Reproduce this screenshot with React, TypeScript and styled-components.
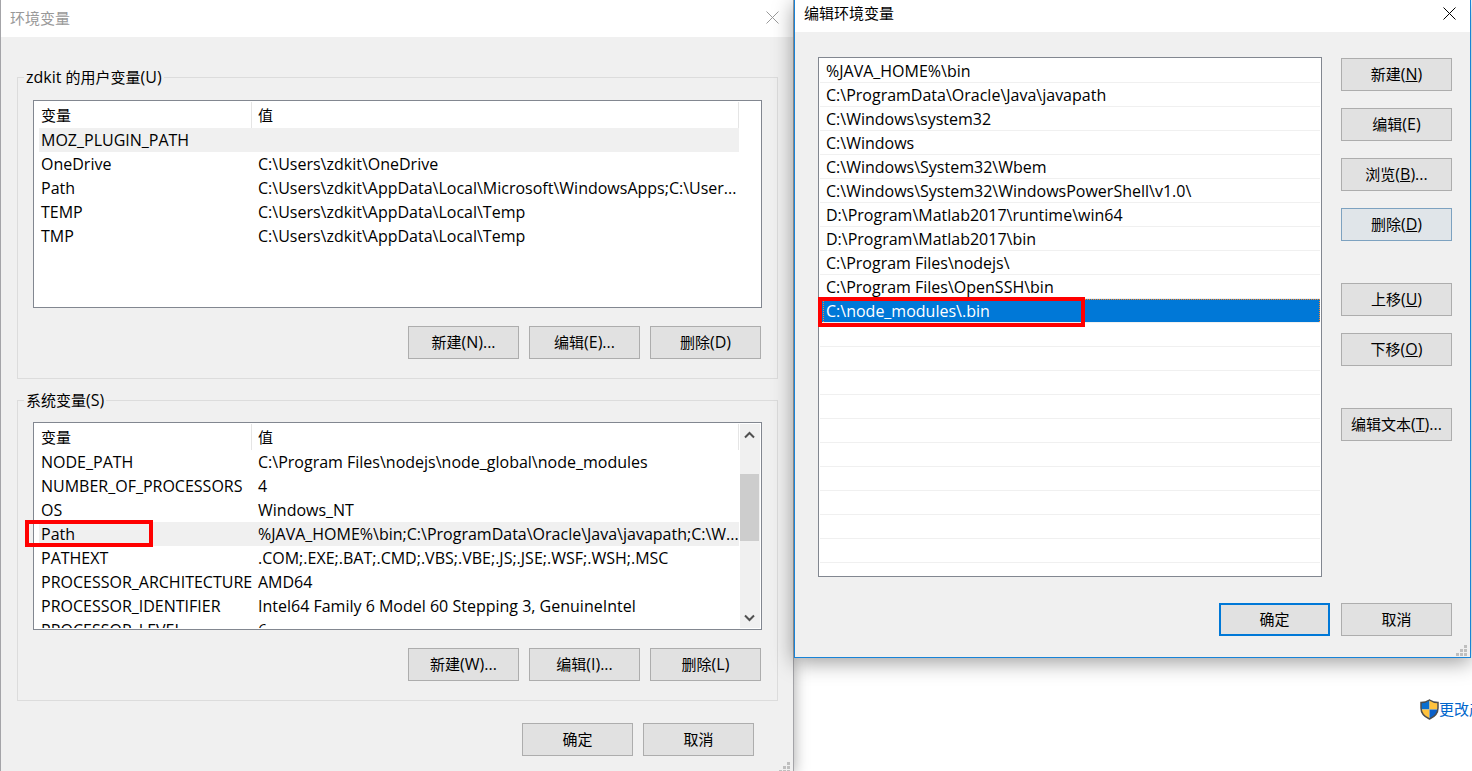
import React from "react";
import styled, { createGlobalStyle, css } from "styled-components";

const GlobalStyle = createGlobalStyle`
  * { box-sizing: border-box; }
  body {
    margin: 0;
    background: #fff;
    color: #000;
    font: 15px/24px "Open Sans", "Noto Sans CJK SC", sans-serif;
    overflow: hidden;
  }
  button { font: inherit; color: inherit; }
`;

const Desktop = styled.div`
  display: grid;
  grid-template-columns: minmax(0, 794fr) minmax(0, 678fr);
  min-height: 100vh;
`;

const Side = styled.div`
  position: relative;
  z-index: 1;
  padding-right: 1px;
`;

const Window = styled.section<{ $active?: boolean }>`
  position: relative;
  display: flex;
  flex-direction: column;
  background: #f0f0f0;
  ${(p) =>
    p.$active
      ? css`
          border: 1px solid #1883d7;
          border-top: 0;
          box-shadow: 0 4px 20px rgba(0, 0, 0, 0.4);
        `
      : css`
          border: solid #a4a4a8;
          border-width: 0 1px;
          box-shadow: 0 0 14px rgba(0, 0, 0, 0.35);
        `}
`;

const TitleBar = styled.header<{ $active?: boolean }>`
  display: flex;
  align-items: center;
  justify-content: space-between;
  height: ${(p) => (p.$active ? 32 : 37)}px;
  padding: ${(p) => (p.$active ? "0 14px 6px 9px" : "0 14px 2px 9px")};
  background: #fff;
  color: ${(p) => (p.$active ? "#000" : "#999")};
`;

const Title = styled.h1`
  margin: 0;
  font-size: 15px;
  font-weight: 400;
`;

const CloseButton = styled.button`
  display: flex;
  padding: 0;
  border: 0;
  background: none;
`;

const Body = styled.div`
  display: flex;
  flex-direction: column;
  gap: 9px;
  padding: 28px 15px 18px 16px;
`;

const Group = styled.fieldset<{ $compact?: boolean }>`
  min-width: 0;
  margin: 0;
  padding: ${(p) => (p.$compact ? 10 : 11)}px 15px 19px;
  border: 1px solid #dcdcdc;
`;

const Legend = styled.legend`
  height: 24px;
  margin-left: -9px;
  padding: 0 2px;
`;

/* Latin letters and punctuation beside the 15px Chinese labels */
const Key = styled.span`
  font-size: 16px;
`;

const ListFrame = styled.div`
  position: relative;
  height: 208px;
  border: 1px solid #828790;
  background: #fff;
`;

const Viewport = styled.div`
  display: flex;
  height: 100%;
  padding: 1px 1px 1px 5px;
`;

const TableClip = styled.div<{ $scrolls?: boolean }>`
  flex: 1;
  min-width: 0;
  margin-right: ${(p) => (p.$scrolls ? 1 : 21)}px;
  overflow: hidden;
`;

const Table = styled.table`
  width: 100%;
  table-layout: fixed;
  border-collapse: separate;
  border-spacing: 0;

  th,
  td {
    padding: 0 0 0 6px;
    text-align: left;
    font-weight: 400;
    white-space: nowrap;
    overflow: hidden;
  }
  th:first-child,
  td:first-child {
    width: 213px;
    padding-left: 2px;
  }
  th {
    height: 26px;
    border-right: 1px solid #e5e5e5;
  }
  td {
    height: 24px;
    font-size: 16px;
  }
`;

const Row = styled.tr<{ $selected?: boolean }>`
  background: ${(p) => (p.$selected ? "#f0f0f0" : "transparent")};
`;

const ScrollBar = styled.div`
  display: flex;
  flex-direction: column;
  justify-content: space-between;
  width: 20px;
  background: #f0f0f0;
`;

const ScrollButton = styled.button`
  display: flex;
  justify-content: center;
  align-items: center;
  width: 19px;
  height: 21px;
  padding: 0;
  border: 0;
  background: none;
`;

const Thumb = styled.div`
  width: 19px;
  height: 67px;
  margin: 29px 0 auto;
  background: #cdcdcd;
`;

const Highlight = styled.div`
  position: absolute;
  border: 4px solid #f00;
  pointer-events: none;
`;

const VariableHighlight = styled(Highlight)`
  left: -9px;
  top: 97px;
  width: 128px;
  height: 27px;
`;

const EntryHighlight = styled(Highlight)`
  left: -2px;
  top: -2px;
  width: 267px;
  height: 30px;
`;

const Actions = styled.div<{ $kind: "group" | "window" | "dialog" }>`
  display: flex;
  justify-content: flex-end;
  gap: ${(p) => (p.$kind === "dialog" ? 11 : 10)}px;
  ${(p) => p.$kind === "group" && "padding: 18px 1px 0 0;"}
  ${(p) => p.$kind === "window" && "padding: 13px 24px 0 0;"}
  ${(p) => p.$kind === "dialog" && "padding-top: 26px;"}
`;

const PushButton = styled.button<{ $look?: "default" | "hover" }>`
  width: 111px;
  height: 33px;
  padding: 0 0 2px;
  border: 1px solid #adadad;
  background: #e1e1e1;
  line-height: 24px;
  white-space: nowrap;
  ${(p) => p.$look === "default" && "border: 2px solid #0078d7;"}
  ${(p) => p.$look === "hover" && "border-color: #7da2c0; background: #e0e5e9;"}
`;

const Grip = styled.svg`
  position: absolute;
  right: 3px;
  bottom: 1px;
`;

const DialogBody = styled.div`
  padding: 25px 18px 21px 23px;
`;

const DialogMain = styled.div`
  display: flex;
  gap: 19px;
`;

const EntryList = styled.ul`
  flex: 1;
  min-width: 0;
  height: 520px;
  margin: 0;
  padding: 1px;
  border: 1px solid #828790;
  background: #fff;
  font-size: 16px;
  list-style: none;
`;

const Entry = styled.li<{ $selected?: boolean }>`
  position: relative;
  height: 24px;
  padding-left: 6px;
  border-bottom: 1px solid #f0f0f0;
  white-space: nowrap;
  ${(p) =>
    p.$selected &&
    css`
      background: #0078d7 padding-box;
      color: #fff;

      &::before {
        content: "";
        position: absolute;
        inset: 0 0 0 3px;
        border: 1px dotted #ff8728;
        border-bottom: 0;
      }
    `}
`;

const ButtonColumn = styled.div`
  display: flex;
  flex-direction: column;
  gap: 42px;
  padding-top: 1px;
`;

const ButtonStack = styled.div`
  display: flex;
  flex-direction: column;
  gap: 17px;
`;

const LinkRow = styled.div`
  width: 52px;
  margin: 39px -1px 0 auto;
  overflow: hidden;
`;

const ShieldLink = styled.a`
  display: flex;
  align-items: center;
  color: #0066cc;
  text-decoration: none;
  white-space: nowrap;

  svg {
    flex: none;
  }
`;

function CloseIcon() {
  return (
    <svg width="13" height="13" viewBox="0 0 13 13" fill="none" stroke="currentColor">
      <path d="M.5.5l12 12M12.5.5l-12 12" />
    </svg>
  );
}

function ChevronIcon({ down }: { down?: boolean }) {
  return (
    <svg width="11" height="8" viewBox="0 0 11 8" fill="none" stroke="#505050" strokeWidth="2">
      <path d={down ? "M1 1.5l4.5 4.5L10 1.5" : "M1 6.5L5.5 2 10 6.5"} />
    </svg>
  );
}

function SizeGrip() {
  return (
    <Grip width="11" height="11" viewBox="0 0 11 11" fill="#bfbfbf" aria-hidden="true">
      <path d="M8 0h3v3H8zM4 4h3v3H4zM8 4h3v3H8zM0 8h3v3H0zM4 8h3v3H4zM8 8h3v3H8z" />
    </Grip>
  );
}

function ShieldIcon() {
  return (
    <svg width="19" height="21" viewBox="0 0 19 21" aria-hidden="true">
      <path d="M9.5 1C7 2.8 4 3.6 1 3.6V9c0 .5 0 1 .1 1.500h8.400z" fill="#0a6fd0" />
      <path d="M9.500 1c2.500 1.800 5.500 2.600 8.500 2.600V9c0 .5 0 1-.1 1.500H9.500z" fill="#ffc23d" />
      <path d="M1 10.500h8.500V20C4.500 17.800 1.400 14.800 1 10.500z" fill="#ffc23d" />
      <path d="M9.500 10.500H18c-.4 4.300-3.500 7.300-8.500 9.500z" fill="#0a5fc8" />
      <path
        d="M9.500 1C7 2.800 4 3.600 1 3.600V9c0 5 3 8.600 8.500 11C15 17.600 18 14 18 9V3.600C15 3.600 12 2.800 9.500 1z"
        fill="none"
        stroke="#4d4d4d"
        strokeWidth="1.500"
      />
    </svg>
  );
}

type Variable = [name: string, value: string];

const userVariables: Variable[] = [
  ["MOZ_PLUGIN_PATH", ""],
  ["OneDrive", "C:\\Users\\zdkit\\OneDrive"],
  ["Path", "C:\\Users\\zdkit\\AppData\\Local\\Microsoft\\WindowsApps;C:\\User..."],
  ["TEMP", "C:\\Users\\zdkit\\AppData\\Local\\Temp"],
  ["TMP", "C:\\Users\\zdkit\\AppData\\Local\\Temp"],
];

const systemVariables: Variable[] = [
  ["NODE_PATH", "C:\\Program Files\\nodejs\\node_global\\node_modules"],
  ["NUMBER_OF_PROCESSORS", "4"],
  ["OS", "Windows_NT"],
  ["Path", "%JAVA_HOME%\\bin;C:\\ProgramData\\Oracle\\Java\\javapath;C:\\W..."],
  ["PATHEXT", ".COM;.EXE;.BAT;.CMD;.VBS;.VBE;.JS;.JSE;.WSF;.WSH;.MSC"],
  ["PROCESSOR_ARCHITECTURE", "AMD64"],
  ["PROCESSOR_IDENTIFIER", "Intel64 Family 6 Model 60 Stepping 3, GenuineIntel"],
  ["PROCESSOR_LEVEL", "6"],
];

const entries = [
  "%JAVA_HOME%\\bin",
  "C:\\ProgramData\\Oracle\\Java\\javapath",
  "C:\\Windows\\system32",
  "C:\\Windows",
  "C:\\Windows\\System32\\Wbem",
  "C:\\Windows\\System32\\WindowsPowerShell\\v1.0\\",
  "D:\\Program\\Matlab2017\\runtime\\win64",
  "D:\\Program\\Matlab2017\\bin",
  "C:\\Program Files\\nodejs\\",
  "C:\\Program Files\\OpenSSH\\bin",
  "C:\\node_modules\\.bin",
];
const EMPTY_ROWS = 10;

interface VariableListProps {
  rows: Variable[];
  selected: string;
  scrolls?: boolean;
}

function VariableList({ rows, selected, scrolls }: VariableListProps) {
  return (
    <ListFrame>
      <Viewport>
        <TableClip $scrolls={scrolls}>
          <Table>
            <thead>
              <tr>
                <th scope="col">变量</th>
                <th scope="col">值</th>
              </tr>
            </thead>
            <tbody>
              {rows.map(([name, value]) => (
                <Row key={name} $selected={name === selected}>
                  <td>{name}</td>
                  <td>{value}</td>
                </Row>
              ))}
            </tbody>
          </Table>
        </TableClip>
        {scrolls && (
          <ScrollBar>
            <ScrollButton type="button" aria-label="向上滚动">
              <ChevronIcon />
            </ScrollButton>
            <Thumb />
            <ScrollButton type="button" aria-label="向下滚动">
              <ChevronIcon down />
            </ScrollButton>
          </ScrollBar>
        )}
      </Viewport>
      {scrolls && <VariableHighlight />}
    </ListFrame>
  );
}

export default function App() {
  return (
    <>
      <GlobalStyle />
      <Desktop>
        <Window>
          <TitleBar>
            <Title>环境变量</Title>
            <CloseButton type="button" aria-label="关闭">
              <CloseIcon />
            </CloseButton>
          </TitleBar>
          <Body>
            <Group>
              <Legend><Key>zdkit </Key>的用户变量<Key>(U)</Key></Legend>
              <VariableList rows={userVariables} selected="MOZ_PLUGIN_PATH" />
              <Actions $kind="group">
                <PushButton type="button">新建<Key>(N)...</Key></PushButton>
                <PushButton type="button">编辑<Key>(E)...</Key></PushButton>
                <PushButton type="button">删除<Key>(D)</Key></PushButton>
              </Actions>
            </Group>
            <Group $compact>
              <Legend>系统变量<Key>(S)</Key></Legend>
              <VariableList rows={systemVariables} selected="Path" scrolls />
              <Actions $kind="group">
                <PushButton type="button">新建<Key>(W)...</Key></PushButton>
                <PushButton type="button">编辑<Key>(I)...</Key></PushButton>
                <PushButton type="button">删除<Key>(L)</Key></PushButton>
              </Actions>
            </Group>
            <Actions $kind="window">
              <PushButton type="button">确定</PushButton>
              <PushButton type="button">取消</PushButton>
            </Actions>
          </Body>
          <SizeGrip />
        </Window>
        <Side>
          <Window $active>
            <TitleBar $active>
              <Title>编辑环境变量</Title>
              <CloseButton type="button" aria-label="关闭">
                <CloseIcon />
              </CloseButton>
            </TitleBar>
            <DialogBody>
              <DialogMain>
                <EntryList>
                  {entries.map((entry, i) => {
                    const selected = i === entries.length - 1;
                    return (
                      <Entry key={entry} $selected={selected}>
                        {entry}
                        {selected && <EntryHighlight />}
                      </Entry>
                    );
                  })}
                  {Array.from({ length: EMPTY_ROWS }, (_, i) => (
                    <Entry key={i} />
                  ))}
                </EntryList>
                <ButtonColumn>
                  <ButtonStack>
                    <PushButton type="button">新建<Key>(<u>N</u>)</Key></PushButton>
                    <PushButton type="button">编辑<Key>(E)</Key></PushButton>
                    <PushButton type="button">浏览<Key>(<u>B</u>)...</Key></PushButton>
                    <PushButton type="button" $look="hover">删除<Key>(<u>D</u>)</Key></PushButton>
                  </ButtonStack>
                  <ButtonStack>
                    <PushButton type="button">上移<Key>(<u>U</u>)</Key></PushButton>
                    <PushButton type="button">下移<Key>(<u>O</u>)</Key></PushButton>
                  </ButtonStack>
                  <PushButton type="button">编辑文本<Key>(<u>T</u>)...</Key></PushButton>
                </ButtonColumn>
              </DialogMain>
              <Actions $kind="dialog">
                <PushButton type="button" $look="default">确定</PushButton>
                <PushButton type="button">取消</PushButton>
              </Actions>
            </DialogBody>
            <SizeGrip />
          </Window>
          <LinkRow>
            <ShieldLink href="#product-key">
              <ShieldIcon />
              更改产品密钥
            </ShieldLink>
          </LinkRow>
        </Side>
      </Desktop>
    </>
  );
}
